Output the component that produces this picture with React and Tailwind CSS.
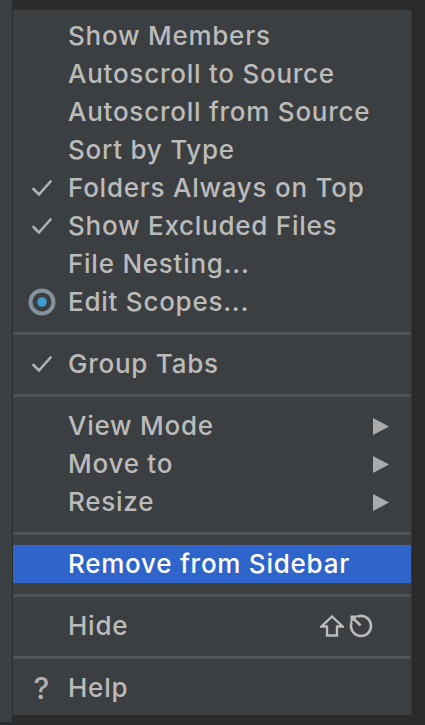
import React from "react";

const font = { fontFamily: '"Inter", "Liberation Sans", sans-serif' };

function Check() {
  return (
    <svg width="20" height="17" viewBox="0 0 20 17" fill="none">
      <path d="M1.5 9 L7 14.5 L18.5 1.5" stroke="#afb1b3" strokeWidth="2.6" strokeLinecap="round" strokeLinejoin="round" />
    </svg>
  );
}

function Radio() {
  return (
    <svg width="28" height="28" viewBox="0 0 28 28">
      <circle cx="14" cy="14" r="11.5" fill="none" stroke="#84939e" strokeWidth="4" />
      <circle cx="14" cy="14" r="4.8" fill="#3b9ccd" />
    </svg>
  );
}

function Arrow() {
  return (
    <svg width="16" height="17" viewBox="0 0 16 17">
      <polygon points="0,0 16,8.5 0,17" fill="#a9abad" />
    </svg>
  );
}

function ShiftEsc() {
  return (
    <div className="flex items-center gap-[5px]">
      <svg width="24" height="22" viewBox="0 0 24 22" fill="none">
        <path d="M12 1.5 L22.5 11.5 L17 11.5 L17 20.5 L7 20.5 L7 11.5 L1.5 11.5 Z" stroke="#bbbbbb" strokeWidth="2.4" strokeLinejoin="miter" />
      </svg>
      <svg width="24" height="24" viewBox="0 0 24 24" fill="none">
        <path d="M8.5 2.6 A10 10 0 1 1 2.6 8.5" stroke="#bbbbbb" strokeWidth="2.6" />
        <path d="M11.5 11.5 L3 3" stroke="#bbbbbb" strokeWidth="2.6" />
        <path d="M1.5 1.5 L9.5 1.5 L1.5 9.5 Z" fill="#bbbbbb" />
      </svg>
    </div>
  );
}

function Row({ label, icon, right, rightPad = "pr-[22px]", selected }) {
  return (
    <div
      className={
        "flex items-center h-[38px] " + (selected ? "bg-[#2f65ca]" : "")
      }
    >
      <div className="w-[55px] flex items-center justify-center pl-[2px]">{icon}</div>
      <div
        className={
          "flex-1 text-[26px] leading-none font-medium tracking-[0.75px] " +
          (selected ? "text-white" : "text-[#bbbbbb]")
        }
      >
        {label}
      </div>
      {right && <div className={rightPad + " flex items-center"}>{right}</div>}
    </div>
  );
}

function Sep() {
  return (
    <div className="pt-[11px] pb-[10px]">
      <div className="h-[3px] bg-[#515355]" />
    </div>
  );
}

export default function App() {
  return (
    <div className="w-[425px] h-[725px] bg-[#2b2b2b] flex overflow-hidden" style={font}>
      <div className="w-[13px] h-[722px] bg-[#3c3f41] border-r border-[#2a2c2d]" />
      <div className="flex flex-col pt-[10px]">
        <div className="w-[399px] bg-[#3c3f41] pt-[7px] pb-[8px] border-r border-[#323436]">
          <Row label="Show Members" />
          <Row label="Autoscroll to Source" />
          <Row label="Autoscroll from Source" />
          <Row label="Sort by Type" />
          <Row label="Folders Always on Top" icon={<Check />} />
          <Row label="Show Excluded Files" icon={<Check />} />
          <Row label="File Nesting..." />
          <Row label="Edit Scopes..." icon={<Radio />} />
          <Sep />
          <Row label="Group Tabs" icon={<Check />} />
          <Sep />
          <Row label="View Mode" right={<Arrow />} />
          <Row label="Move to" right={<Arrow />} />
          <Row label="Resize" right={<Arrow />} />
          <Sep />
          <Row label="Remove from Sidebar" selected />
          <Sep />
          <Row label="Hide" right={<ShiftEsc />} rightPad="pr-[38px]" />
          <Sep />
          <Row
            label="Help"
            icon={<span className="text-[30px] font-medium leading-none text-[#afb1b3]">?</span>}
          />
        </div>
      </div>
    </div>
  );
}
